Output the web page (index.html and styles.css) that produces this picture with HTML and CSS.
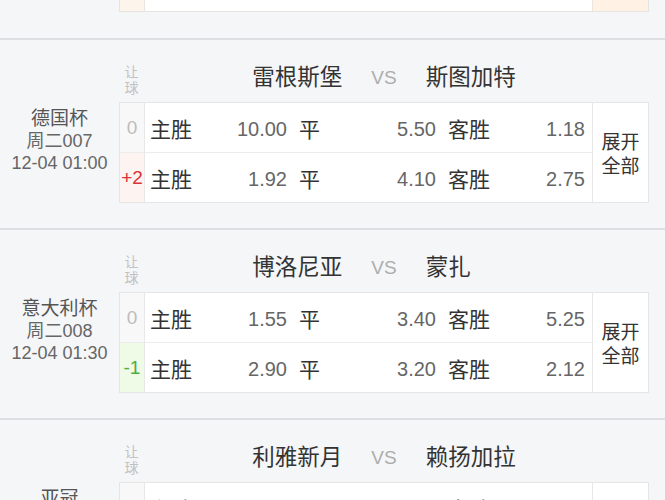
FILE: index.html
```html
<!DOCTYPE html>
<html lang="zh-CN">
<head>
<meta charset="utf-8">
<title>赛事列表</title>
<link rel="stylesheet" href="styles.css">
</head>
<body>
<div class="page">
  <div class="stub">
    <div class="stub-row">
      <div class="stub-hc"></div>
      <div class="stub-mid"></div>
      <div class="stub-exp"></div>
    </div>
  </div>

  <section class="match">
    <div class="league">
      <div class="lg-name">德国杯</div>
      <div class="lg-line">周二007</div>
      <div class="lg-line">12-04 01:00</div>
    </div>
    <div class="main">
      <div class="head">
        <div class="rq">让<br>球</div>
        <div class="home">雷根斯堡</div>
        <div class="vs">VS</div>
        <div class="away">斯图加特</div>
      </div>
      <div class="table">
        <div class="hcol">
          <div class="hc zero">0</div>
          <div class="hc pos">+2</div>
        </div>
        <div class="odds">
          <div class="row">
            <div class="cell"><span class="lab">主胜</span><span class="num">10.00</span></div>
            <div class="cell"><span class="lab">平</span><span class="num">5.50</span></div>
            <div class="cell"><span class="lab">客胜</span><span class="num">1.18</span></div>
          </div>
          <div class="row">
            <div class="cell"><span class="lab">主胜</span><span class="num">1.92</span></div>
            <div class="cell"><span class="lab">平</span><span class="num">4.10</span></div>
            <div class="cell"><span class="lab">客胜</span><span class="num">2.75</span></div>
          </div>
        </div>
        <div class="exp">展开<br>全部</div>
      </div>
    </div>
  </section>

  <section class="match">
    <div class="league">
      <div class="lg-name">意大利杯</div>
      <div class="lg-line">周二008</div>
      <div class="lg-line">12-04 01:30</div>
    </div>
    <div class="main">
      <div class="head">
        <div class="rq">让<br>球</div>
        <div class="home">博洛尼亚</div>
        <div class="vs">VS</div>
        <div class="away">蒙扎</div>
      </div>
      <div class="table">
        <div class="hcol">
          <div class="hc zero">0</div>
          <div class="hc neg">-1</div>
        </div>
        <div class="odds">
          <div class="row">
            <div class="cell"><span class="lab">主胜</span><span class="num">1.55</span></div>
            <div class="cell"><span class="lab">平</span><span class="num">3.40</span></div>
            <div class="cell"><span class="lab">客胜</span><span class="num">5.25</span></div>
          </div>
          <div class="row">
            <div class="cell"><span class="lab">主胜</span><span class="num">2.90</span></div>
            <div class="cell"><span class="lab">平</span><span class="num">3.20</span></div>
            <div class="cell"><span class="lab">客胜</span><span class="num">2.12</span></div>
          </div>
        </div>
        <div class="exp">展开<br>全部</div>
      </div>
    </div>
  </section>

  <section class="match">
    <div class="league">
      <div class="lg-name">亚冠</div>
      <div class="lg-line">周二009</div>
      <div class="lg-line">12-04 02:00</div>
    </div>
    <div class="main">
      <div class="head">
        <div class="rq">让<br>球</div>
        <div class="home">利雅新月</div>
        <div class="vs">VS</div>
        <div class="away">赖扬加拉</div>
      </div>
      <div class="table">
        <div class="hcol">
          <div class="hc zero">0</div>
          <div class="hc pos">+1</div>
        </div>
        <div class="odds">
          <div class="row">
            <div class="cell"><span class="lab">主胜</span><span class="num">1.30</span></div>
            <div class="cell"><span class="lab">平</span><span class="num">4.60</span></div>
            <div class="cell"><span class="lab">客胜</span><span class="num">7.00</span></div>
          </div>
          <div class="row">
            <div class="cell"><span class="lab">主胜</span><span class="num">2.25</span></div>
            <div class="cell"><span class="lab">平</span><span class="num">3.50</span></div>
            <div class="cell"><span class="lab">客胜</span><span class="num">2.55</span></div>
          </div>
        </div>
        <div class="exp">展开<br>全部</div>
      </div>
    </div>
  </section>
</div>
</body>
</html>
```

FILE: styles.css
```css
html, body {
  margin: 0;
  padding: 0;
  height: 500px;
  overflow: hidden;
  background: #f5f6f8;
}

body {
  font-family: "Liberation Sans", "Noto Sans CJK SC", sans-serif;
  color: #333;
}

.page {
  width: 665px;
}

/* partial card at the top */
.stub {
  padding-bottom: 26px;
}

.stub-row {
  display: flex;
  margin-left: 119px;
  width: 530px;
  height: 12px;
  box-sizing: border-box;
  border: 1px solid #e6e3e0;
  border-top: none;
}

.stub-hc {
  width: 24px;
  background: #fdf4ec;
  border-right: 1px solid #ebe6e1;
}

.stub-mid {
  flex: 1;
  background: #fff;
}

.stub-exp {
  width: 55px;
  background: #fff1e3;
  border-left: 1px solid #ebe6e1;
}

/* match card */
.match {
  display: grid;
  grid-template-columns: 119px 530px;
  border-top: 2px solid #dfdfe3;
  padding-bottom: 25px;
}

.league {
  padding-top: 68px;
  text-align: center;
  color: #666;
  line-height: 22px;
  font-size: 18px;
}

.lg-name {
  font-size: 19px;
  color: #555;
}

.main {
  padding-top: 20px;
}

.head {
  display: grid;
  grid-template-columns: 25px 1fr auto 1fr 25px;
  height: 36px;
  margin-bottom: 6px;
}

.rq {
  margin-top: 4px;
  font-size: 14px;
  line-height: 16px;
  color: #c2c2c2;
  text-align: center;
}

.home,
.away {
  margin-top: 3px;
  font-size: 22.5px;
  line-height: 30px;
  color: #333;
}

.home {
  text-align: right;
  margin-right: 29px;
}

.away {
  text-align: left;
  margin-left: 29px;
}

.vs {
  margin-top: 3px;
  font-size: 19px;
  line-height: 30px;
  color: #adadad;
}

.table {
  display: flex;
  border: 1px solid #e5e5e5;
  background: #fff;
  height: 99px;
}

.hcol {
  width: 24px;
  display: flex;
  flex-direction: column;
  border-right: 1px solid #e8e8e8;
}

.hc {
  flex: 1;
  display: flex;
  align-items: center;
  justify-content: center;
  padding-top: 1px;
  font-size: 19px;
}

.hc:first-child {
  border-bottom: 1px solid #ececec;
}

.zero {
  color: #bdbdbd;
  background: #f8f8f8;
}

.pos {
  color: #d8333b;
  background: #fdf3f0;
}

.neg {
  color: #4caf3f;
  background: #effae7;
}

.odds {
  flex: 1;
  display: flex;
  flex-direction: column;
}

.row {
  flex: 1;
  display: flex;
}

.row:first-child {
  border-bottom: 1px solid #ececec;
}

.cell {
  flex: 1;
  display: flex;
  align-items: center;
  justify-content: space-between;
  padding: 0 7px 0 5px;
}

.lab {
  font-size: 21px;
  color: #333;
}

.num {
  padding-top: 3px;
  font-size: 20px;
  color: #666;
}

.exp {
  width: 55px;
  border-left: 1px solid #e8e8e8;
  display: flex;
  align-items: center;
  justify-content: center;
  padding-top: 5px;
  text-align: center;
  font-size: 19px;
  line-height: 24px;
  color: #333;
}
```
